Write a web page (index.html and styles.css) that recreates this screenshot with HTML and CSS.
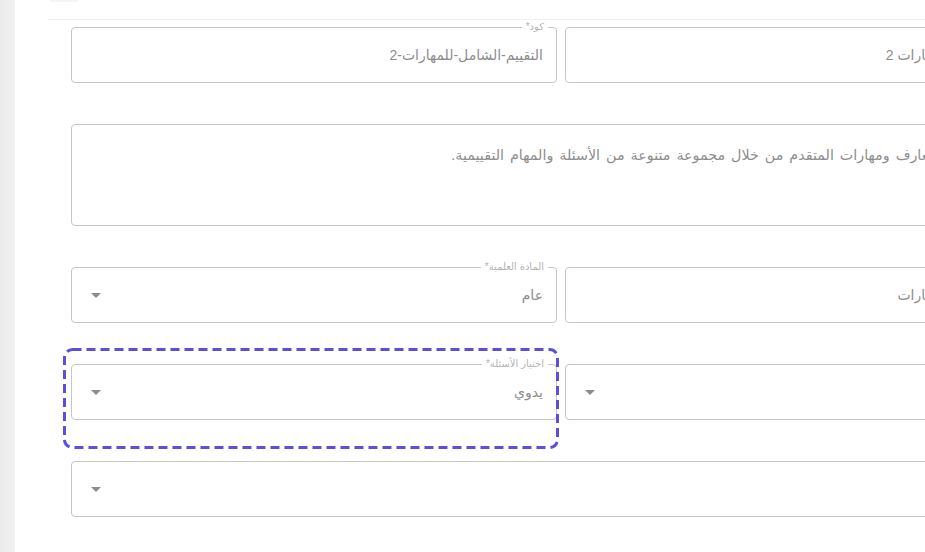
FILE: index.html
```html
<!DOCTYPE html>
<html lang="ar">
<head>
<meta charset="utf-8">
<title>تعديل التقييم</title>
<link rel="stylesheet" href="styles.css">
</head>
<body>
<div class="app">
  <aside class="rail"></aside>
  <main class="main">
    <div class="topbar"><span class="topbar-tab"></span></div>
    <form class="form" dir="rtl">
      <div class="field">
        <span class="field-label">اسم التقييم*</span>
        <span class="field-value">التقييم الشامل للمهارات 2</span>
      </div>
      <div class="field">
        <span class="field-label">كود*</span>
        <span class="field-value">التقييم-الشامل-للمهارات-2</span>
      </div>
      <div class="field field-area span-2">
        <span class="field-label">الوصف</span>
        <span class="field-value">يقيس التقييم معارف ومهارات المتقدم من خلال مجموعة متنوعة من الأسئلة والمهام التقييمية.</span>
      </div>
      <div class="field">
        <span class="field-label">نوع التقييم*</span>
        <span class="field-value">التقييم الشامل للمهارات</span>
      </div>
      <div class="field field-select">
        <span class="field-label">المادة العلمية*</span>
        <span class="field-value">عام</span>
        <span class="caret"></span>
      </div>
      <div class="field field-select">
        <span class="field-label">المستوى</span>
        <span class="field-value"></span>
        <span class="caret"></span>
      </div>
      <div class="field field-select is-highlighted">
        <span class="field-label">اختيار الأسئلة*</span>
        <span class="field-value">يدوي</span>
        <span class="caret"></span>
        <svg class="highlight" width="496" height="101" viewBox="0 0 496 101" aria-hidden="true">
          <rect x="1.5" y="1.5" width="493" height="98" rx="8" ry="8" fill="none" stroke="#5b50d6" stroke-width="3" stroke-dasharray="9 5"/>
        </svg>
      </div>
      <div class="field field-select span-2">
        <span class="field-label">بنك الأسئلة</span>
        <span class="field-value"></span>
        <span class="caret"></span>
      </div>
    </form>
  </main>
</div>
</body>
</html>
```
FILE: styles.css
```css
html, body {
  margin: 0;
  padding: 0;
  background: #ffffff;
  overflow: hidden;
  height: 100%;
}

body {
  font-family: "Liberation Sans", "DejaVu Sans", sans-serif;
  color: #8a8a8a;
}

.app {
  display: flex;
  width: 925px;
  height: 552px;
  overflow: hidden;
}

.rail {
  flex: 0 0 15px;
  background: linear-gradient(to right, #ebebeb, #f2f2f2);
}

.main {
  flex: 1 1 auto;
  min-width: 0;
  padding-left: 33px;
  overflow: hidden;
}

.topbar {
  height: 19px;
  border-bottom: 1px solid #f1f1f1;
  width: 1100px;
}

.topbar-tab {
  display: block;
  width: 28px;
  height: 2px;
  margin-left: 2px;
  background: #f5f5f5;
}

.form {
  display: grid;
  grid-template-columns: 486px 486px;
  column-gap: 8px;
  row-gap: 41px;
  width: 980px;
  margin: 7px 0 0 23px;
}

.span-2 {
  grid-column: 1 / -1;
}

.field {
  position: relative;
  box-sizing: border-box;
  height: 56px;
  border: 1px solid #c6c6c6;
  border-radius: 4px;
  display: flex;
  align-items: center;
  padding: 0 13px;
}

.field-area {
  height: 102px;
  align-items: flex-start;
  padding-top: 20px;
  padding-right: 30px;
}

.field-area .field-value {
  font-size: 14.3px;
  word-spacing: 2px;
}

.field-value {
  font-size: 14px;
  line-height: 20px;
  color: #8d8d8d;
  white-space: nowrap;
}

.field-label {
  position: absolute;
  top: -7px;
  right: 8px;
  padding: 0 4px;
  background: #ffffff;
  font-size: 10px;
  line-height: 12px;
  color: #b3b3b3;
  white-space: nowrap;
}

.field-select .caret {
  margin-right: auto;
  margin-left: 6px;
  width: 0;
  height: 0;
  border-left: 5px solid transparent;
  border-right: 5px solid transparent;
  border-top: 5px solid #8c8c8c;
}

.highlight {
  position: absolute;
  left: -9px;
  top: -17px;
  pointer-events: none;
}
```
